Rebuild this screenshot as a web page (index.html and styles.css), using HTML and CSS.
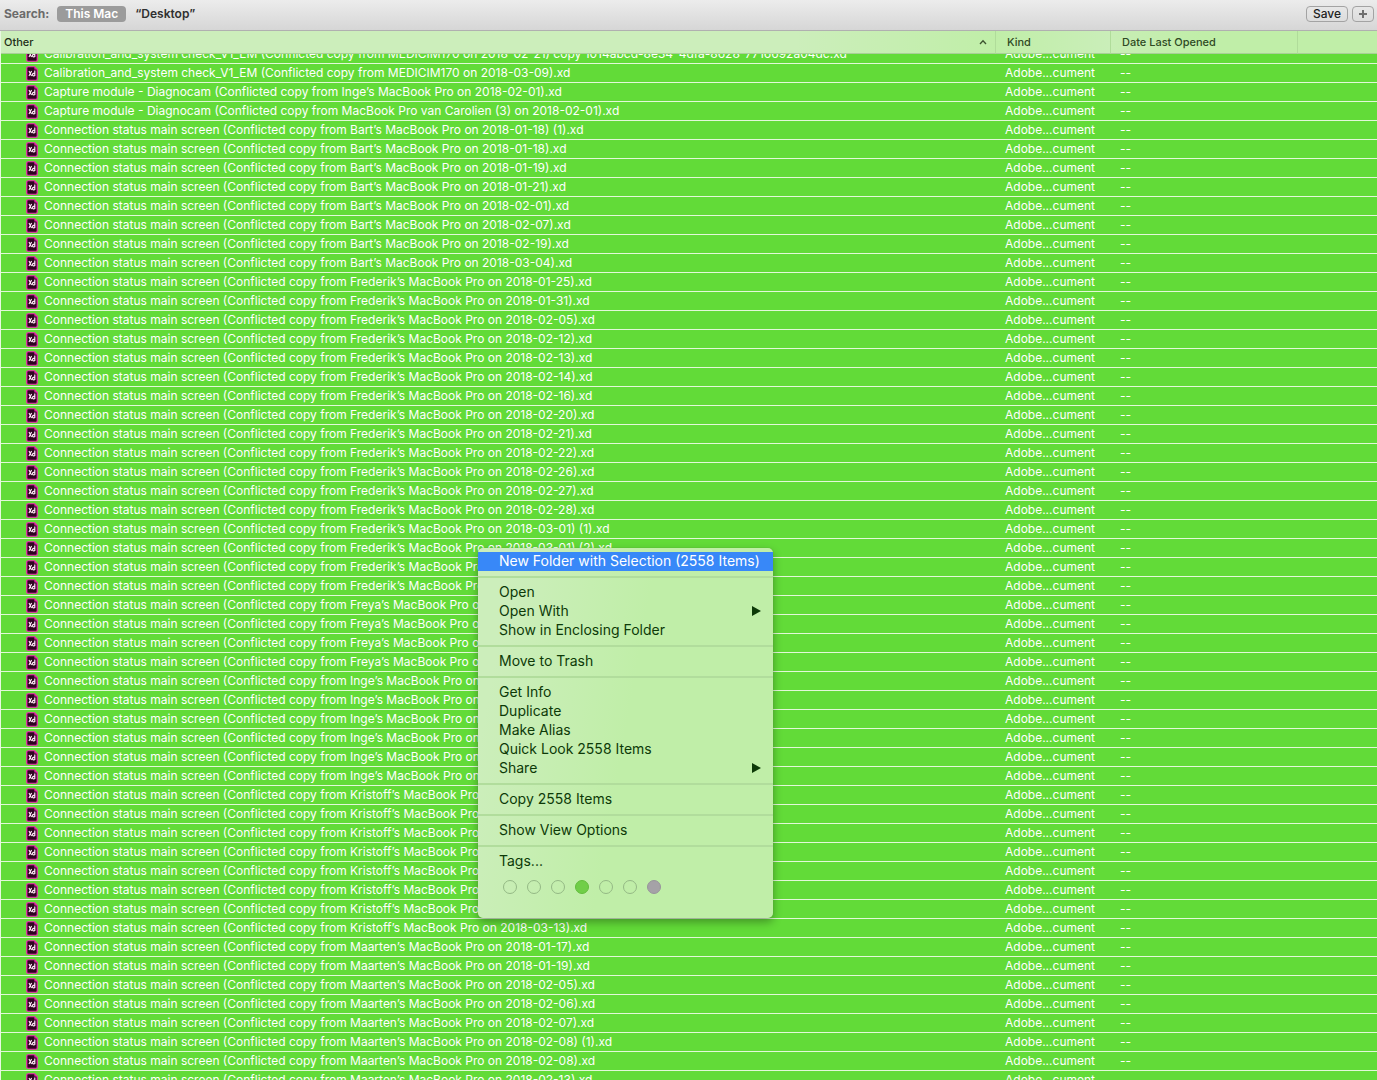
FILE: index.html
```html
<!DOCTYPE html>
<html lang="en">
<head>
<meta charset="utf-8">
<title>Search: This Mac</title>
<link rel="stylesheet" href="styles.css">
</head>
<body>
<svg class="sprite" aria-hidden="true">
  <symbol id="xd-file" viewBox="0 0 12 15">
    <path d="M2 .75h6.600L11.250 3.400V13a1.250 1.250 0 0 1-1.250 1.250H2A1.250 1.250 0 0 1 .75 13V2A1.250 1.250 0 0 1 2 .75z" fill="#2e0420" stroke="#f32fb6" stroke-width="1.200"/>
    <path d="M8.400.6l3 3H8.400z" fill="#d926a0"/>
    <path d="M3 5l2.600 5M5.600 5L3 10M8.800 4.600V10M8.600 7.400H7.300a.7.700 0 0 0-.7.700v1a.7.700 0 0 0 .7.700h1.300" fill="none" stroke="#ffe6f6" stroke-width="1.200"/>
  </symbol>
</svg>

<header class="scope-bar">
  <span class="scope-label">Search:</span>
  <button class="scope scope-active" type="button">This Mac</button>
  <button class="scope" type="button">“Desktop”</button>
  <div class="scope-actions">
    <button class="tool" type="button">Save</button>
    <button class="tool tool-add" type="button" aria-label="Add criteria">
      <svg width="10" height="10" viewBox="0 0 10 10"><path d="M5 1v8M1 5h8" stroke="#6f6f6f" stroke-width="2"/></svg>
    </button>
  </div>
</header>

<main class="list" id="list">
  <table class="files">
    <colgroup><col><col class="col-kind"><col class="col-date"><col class="col-rest"></colgroup>
    <thead>
      <tr>
        <th scope="col"><div class="sorted"><span>Other</span>
          <svg width="8" height="6" viewBox="0 0 8 6"><path d="M1 5l3-3.200L7 5" fill="none" stroke="#3c5230" stroke-width="1.300"/></svg></div></th>
        <th scope="col">Kind</th>
        <th scope="col">Date Last Opened</th>
        <td></td>
      </tr>
    </thead>
    <tbody id="rows"></tbody>
  </table>
</main>

<div class="menu" role="menu">
  <button class="item item-active" role="menuitem" type="button">New Folder with Selection (2558 Items)</button>
  <hr>
  <button class="item" role="menuitem" type="button">Open</button>
  <button class="item" role="menuitem" type="button">Open With <svg class="arrow" width="10" height="10" viewBox="0 0 10 10"><path d="M1 0l9 5-9 5z"/></svg></button>
  <button class="item" role="menuitem" type="button">Show in Enclosing Folder</button>
  <hr>
  <button class="item" role="menuitem" type="button">Move to Trash</button>
  <hr>
  <button class="item" role="menuitem" type="button">Get Info</button>
  <button class="item" role="menuitem" type="button">Duplicate</button>
  <button class="item" role="menuitem" type="button">Make Alias</button>
  <button class="item" role="menuitem" type="button">Quick Look 2558 Items</button>
  <button class="item" role="menuitem" type="button">Share <svg class="arrow" width="10" height="10" viewBox="0 0 10 10"><path d="M1 0l9 5-9 5z"/></svg></button>
  <hr>
  <button class="item" role="menuitem" type="button">Copy 2558 Items</button>
  <hr>
  <button class="item" role="menuitem" type="button">Show View Options</button>
  <hr>
  <button class="item" role="menuitem" type="button">Tags...</button>
  <div class="tags">
    <input type="checkbox" aria-label="Red">
    <input type="checkbox" aria-label="Orange">
    <input type="checkbox" aria-label="Yellow">
    <input type="checkbox" class="tag-green" aria-label="Green" checked>
    <input type="checkbox" aria-label="Blue">
    <input type="checkbox" aria-label="Purple">
    <input type="checkbox" class="tag-gray" aria-label="Gray" checked>
  </div>
</div>
<script src="files.js"></script>
</body>
</html>
```

FILE: files.js
```js
const copies = (owner, dates) => dates.map(date =>
  `Connection status main screen (Conflicted copy from ${owner}’s MacBook Pro on 2018-${date}.xd`);

const files = [
  'Calibration_and_system check_V1_EM (Conflicted copy from MEDICIM170 on 2018-02-21) copy 1014abcd-8e34-4dfa-8628-7716692a04dc.xd',
  'Calibration_and_system check_V1_EM (Conflicted copy from MEDICIM170 on 2018-03-09).xd',
  'Capture module - Diagnocam (Conflicted copy from Inge’s MacBook Pro on 2018-02-01).xd',
  'Capture module - Diagnocam (Conflicted copy from MacBook Pro van Carolien (3) on 2018-02-01).xd',
  ...copies('Bart', ['01-18) (1)', '01-18)', '01-19)', '01-21)', '02-01)', '02-07)', '02-19)', '03-04)']),
  ...copies('Frederik', ['01-25)', '01-31)', '02-05)', '02-12)', '02-13)', '02-14)', '02-16)', '02-20)',
    '02-21)', '02-22)', '02-26)', '02-27)', '02-28)', '03-01) (1)', '03-01) (2)', '03-01)', '03-02)']),
  ...copies('Freya', ['01-18)', '01-19)', '02-01)', '02-05)']),
  ...copies('Inge', ['01-18)', '01-19)', '02-01)', '02-05)', '02-07)', '02-19)']),
  ...copies('Kristoff', ['01-18)', '01-19)', '02-01)', '02-05)', '02-07)', '02-19)', '03-04)', '03-13)']),
  ...copies('Maarten', ['01-17)', '01-19)', '02-05)', '02-06)', '02-07)', '02-08) (1)', '02-08)', '02-13)']),
];

document.getElementById('rows').innerHTML = files.map(name => `
  <tr>
    <td><div class="file"><svg class="file-icon"><use href="#xd-file"/></svg><span>${name}</span></div></td>
    <td>Adobe...cument</td>
    <td>--</td>
    <td></td>
  </tr>`).join('');

// Open the list part of the way through its first row.
document.getElementById('list').scrollTop = 9;
```

FILE: styles.css
```css
* { box-sizing: border-box; }

body {
  margin: 0;
  height: 100vh;
  display: flex;
  flex-direction: column;
  overflow: hidden;
  font: 400 12px/18px Inter, "Liberation Sans", sans-serif;
  background: #fff;
}

button { font: inherit; margin: 0; border: 0; background: none; }

.sprite { display: none; }

/* Search scope bar */
.scope-bar {
  display: flex;
  align-items: center;
  height: 31px;
  padding: 0 3px 2px 4px;
  background: linear-gradient(#ececec, #d6d6d6);
  border-bottom: 1px solid #b0b0b0;
  font-weight: 600;
}
.scope-label { color: #6b6b6b; font-weight: 700; }
.scope {
  height: 16px;
  margin-left: 8px;
  padding: 0 8px;
  border-radius: 4px;
  line-height: 16px;
  color: #303030;
}
.scope + .scope { margin-left: 1px; }
.scope-active { background: #9b9b9b; color: #fff; }
.scope-actions { display: flex; gap: 4px; margin-left: auto; }
.tool {
  display: flex;
  align-items: center;
  justify-content: center;
  height: 16px;
  width: 42px;
  padding: 0;
  border: 1px solid #a3a3a3;
  border-radius: 4px;
  font-weight: 500;
  color: #222;
}
.tool-add { width: 22px; }

/* File list */
.list {
  flex: 1;
  min-height: 0;
  overflow-y: auto;
  scrollbar-width: none;
  border-left: 1px solid #e8f8e0;
}
.files {
  width: 100%;
  table-layout: fixed;
  border-collapse: separate;
  border-spacing: 0;
}
.col-kind { width: 115px; }
.col-date { width: 187px; }
.col-rest { width: 80px; }

thead th, thead td {
  position: sticky;
  top: 0;
  z-index: 1;
  height: 23px;
  padding: 0 11px;
  text-align: left;
  font-size: 11px;
  font-weight: 500;
  color: #2f4a24;
  background: #c0eea8;
  border-left: 1px solid #b0dc9a;
  border-bottom: 1px solid #a9cf98;
}
thead th:first-child {
  padding: 0 8px 0 3px;
  border-left: 0;
  color: #1f2f18;
  background: linear-gradient(90deg, #cceebb 80%, #c0eea8);
}
thead th:nth-child(2) { background: linear-gradient(90deg, #c0eea8, #caeeb9); }
thead th:nth-child(3) { background: linear-gradient(90deg, #c8eeb5, #c0eea8 50%); }
.sorted { display: flex; align-items: center; justify-content: space-between; }

tbody td {
  height: 19px;
  padding: 0 10px;
  background: #62db38;
  border-bottom: 1px solid #e2f8d8;
  color: #fff;
  white-space: nowrap;
}
tbody td:first-child { padding: 0 0 0 25px; }
.file { display: flex; align-items: center; gap: 6px; }
.file-icon { width: 12px; height: 15px; flex: none; }

/* Context menu */
.menu {
  position: absolute;
  left: 478px;
  top: 548px;
  width: 295px;
  padding: 4px 0 23px;
  display: flex;
  flex-direction: column;
  border-radius: 5px;
  background: linear-gradient(100deg, #cceebb 10%, #c0eea8 50%);
  box-shadow: 0 0 1px #5b8a48, 0 4px 10px #00000055;
  font-size: 14px;
}
.item {
  display: flex;
  align-items: center;
  justify-content: space-between;
  height: 19px;
  padding: 0 12px 2px 21px;
  color: #0d3a08;
  text-align: left;
}
.item-active { background: #3888f8; color: #fff; }
.arrow { fill: #0d3a08; }
.menu hr {
  width: 100%;
  height: 2px;
  margin: 5px 0;
  border: 0;
  background: #b1dd9c;
}
.tags { display: flex; gap: 10px; padding: 9px 25px 1px; }
.tags input {
  appearance: none;
  width: 14px;
  height: 14px;
  margin: 0;
  border: 1px solid #94b985;
  border-radius: 50%;
}
.tags .tag-green { background: #70ce48; border-color: #62bd3c; }
.tags .tag-gray { background: #a5a2a7; border-color: #98959b; }
```
